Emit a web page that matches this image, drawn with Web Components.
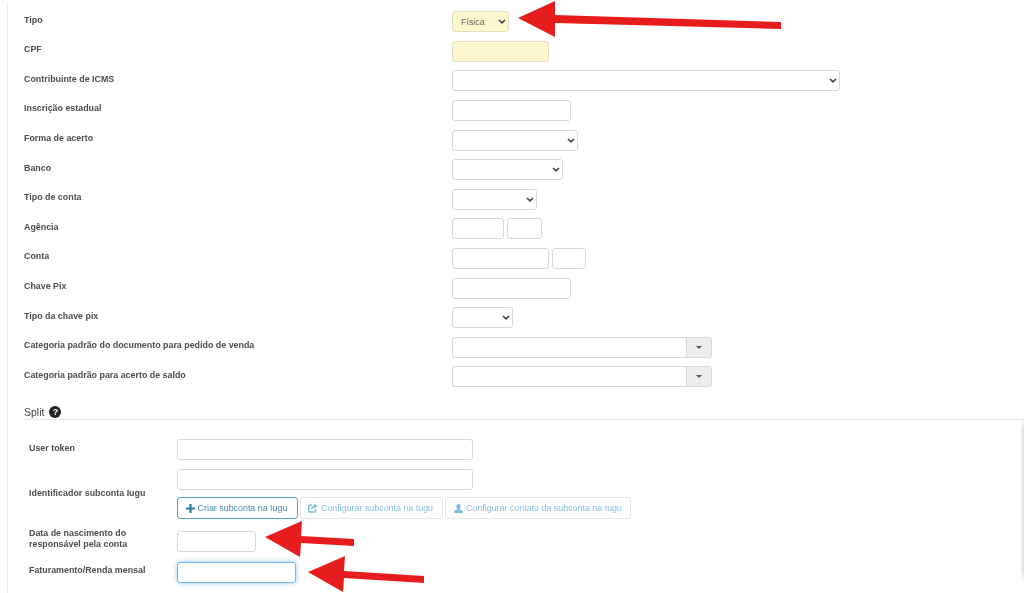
<!DOCTYPE html>
<html lang="pt-BR">
<head>
<meta charset="utf-8">
<title>Cadastro</title>
<style>
  html, body { margin: 0; padding: 0; background: #fff; }
  body { font-family: "Liberation Sans", Arial, sans-serif; overflow: hidden; height: 593px; }
</style>
</head>
<body>
<template id="field-css">
  <style>
    :host { display: inline-block; vertical-align: top; position: relative; }
    input, select {
      display: block; box-sizing: border-box; width: 100%; height: 21px; margin: 0;
      border: 1px solid #d8d8d8; border-radius: 3px; background-color: #fff;
      font: 8.9px "Liberation Sans", Arial, sans-serif; color: #666; padding: 0 0 0 8px; outline: none;
    }
    select { appearance: none; }
    svg { position: absolute; right: 3px; top: 8px; pointer-events: none; }
    :host([tone="warn"]) input, :host([tone="warn"]) select { background-color: #fdf7cd; border-color: #e3dfc2; }
    :host([focused]) input { border-color: #74b6ea; box-shadow: 0 0 5px rgba(102,175,233,.7); }
  </style>
</template>

<form-page>
  <div slot="rows">
    <form-row label="Tipo"><select-field w="57" tone="warn" value="Física"></select-field></form-row>
    <form-row label="CPF"><text-field w="97" tone="warn"></text-field></form-row>
    <form-row label="Contribuinte de ICMS"><select-field w="388"></select-field></form-row>
    <form-row label="Inscrição estadual"><text-field w="119"></text-field></form-row>
    <form-row label="Forma de acerto"><select-field w="126"></select-field></form-row>
    <form-row label="Banco"><select-field w="111"></select-field></form-row>
    <form-row label="Tipo de conta"><select-field w="85"></select-field></form-row>
    <form-row label="Agência"><text-field w="52"></text-field><text-field w="35"></text-field></form-row>
    <form-row label="Conta"><text-field w="97"></text-field><text-field w="34"></text-field></form-row>
    <form-row label="Chave Pix"><text-field w="119"></text-field></form-row>
    <form-row label="Tipo da chave pix"><select-field w="61"></select-field></form-row>
    <form-row label="Categoria padrão do documento para pedido de venda"><combo-field></combo-field></form-row>
    <form-row label="Categoria padrão para acerto de saldo"><combo-field></combo-field></form-row>
  </div>

  <split-section>
    <split-row>
      <span slot="label">User token</span>
      <text-field w="296"></text-field>
    </split-row>
    <split-row>
      <span slot="label">Identificador subconta Iugu</span>
      <text-field w="296"></text-field>
      <div style="display:flex;gap:2px;">
        <action-button primary style="width:121px;padding-right:2px">
          <svg width="9" height="9" viewBox="0 0 9 9" fill="#2f7ea6"><path d="M3.400 0h2.200v3.400H9v2.200H5.600V9H3.400V5.600H0V3.400h3.400z"/></svg>
          Criar subconta na Iugu
        </action-button>
        <action-button style="width:143px;padding-right:2px">
          <svg width="10" height="10" viewBox="0 0 10 10" fill="none" stroke="#7dbcda" stroke-width="1.400"><path d="M7.600 6v2a1 1 0 0 1-1 1H1.700a1 1 0 0 1-1-1V3.300a1 1 0 0 1 1-1H4"/><path d="M3.700 6.200C4 4.200 5.400 3 7.400 3"/><path d="M6.200 .6 9.800 3 6.200 5.400" fill="#7dbcda" stroke="none"/></svg>
          Configurar subconta na Iugu
        </action-button>
        <action-button style="width:186px">
          <svg width="9" height="9" viewBox="0 0 9 9" fill="#7dbcda"><path d="M4.500 0C5.900 0 6.700 1 6.700 2.400 6.700 3.600 6 4.600 5.600 5c0 .5.400.7 1.200 1C8 6.400 9 6.900 9 7.600V9H0V7.600c0-.7 1-1.200 2.200-1.600.8-.3 1.200-.5 1.200-1C3 4.600 2.300 3.600 2.300 2.400 2.300 1 3.100 0 4.500 0z"/></svg>
          Configurar contato da subconta na Iugu
        </action-button>
      </div>
    </split-row>
    <split-row style="margin-top:3px;--lift:-3px">
      <span slot="label">Data de nascimento do responsável pela conta</span>
      <text-field w="79"></text-field>
    </split-row>
    <split-row style="margin-top:1px;--lift:-2px">
      <span slot="label">Faturamento/Renda mensal</span>
      <text-field w="119" focused></text-field>
    </split-row>
  </split-section>

  <arrow-layer></arrow-layer>
</form-page>

<script>
  const CHEVRON = '<svg width="8" height="5" viewBox="0 0 8 5" fill="none" stroke="#444" stroke-width="1.700"><path d="M1 1l3 2.800L7 1"/></svg>';

  function fieldShadow(el, inner) {
    const root = el.attachShadow({ mode: 'open' });
    root.appendChild(document.getElementById('field-css').content.cloneNode(true));
    const box = document.createElement('template');
    box.innerHTML = inner;
    root.appendChild(box.content.cloneNode(true));
    el.style.width = el.getAttribute('w') + 'px';
  }

  class TextField extends HTMLElement {
    connectedCallback() {
      fieldShadow(this, '<input type="text">');
    }
  }

  class SelectField extends HTMLElement {
    connectedCallback() {
      const value = this.getAttribute('value') || '';
      fieldShadow(this, `<select><option>${value}</option></select>${CHEVRON}`);
    }
  }

  // input + dropdown button, the autocomplete thing
  class ComboField extends HTMLElement {
    connectedCallback() {
      this.attachShadow({ mode: 'open' });
      this.shadowRoot.innerHTML = `
        <style>
          :host { display: flex; width: 260px; height: 21px; }
          input {
            flex: 1; min-width: 0; box-sizing: border-box; margin: 0; padding: 0 6px; height: 21px;
            border: 1px solid #d8d8d8; border-right: 0; border-radius: 3px 0 0 3px; outline: none;
          }
          span {
            width: 26px; box-sizing: border-box; border: 1px solid #d8d8d8; border-radius: 0 3px 3px 0;
            background: #eee; display: flex; align-items: center; justify-content: center;
          }
          i { width: 0; height: 0; border: 3px solid transparent; border-top: 3px solid #555; border-bottom: 0; }
        </style>
        <input type="text"><span><i></i></span>`;
    }
  }

  class FormRow extends HTMLElement {
    connectedCallback() {
      this.attachShadow({ mode: 'open' });
      this.shadowRoot.innerHTML = `
        <style>
          :host { display: grid; grid-template-columns: 428px 1fr; height: 29.6px; }
          .label { font: bold 8.9px/13px "Liberation Sans", Arial, sans-serif; color: #4d4d4d; padding-top: 2.4px; }
          .ctl { display: flex; gap: 3px; align-items: flex-start; }
        </style>
        <div class="label">${this.getAttribute('label')}</div>
        <div class="ctl"><slot></slot></div>`;
    }
  }

  class SplitRow extends HTMLElement {
    connectedCallback() {
      this.attachShadow({ mode: 'open' });
      this.shadowRoot.innerHTML = `
        <style>
          :host { display: grid; grid-template-columns: 148px 1fr; align-items: center; }
          .label {
            font: bold 8.9px/11px "Liberation Sans", Arial, sans-serif; color: #4d4d4d;
            padding-right: 8px; margin: -2px 0; transform: translateY(var(--lift, -1px));
          }
          .ctl { display: flex; flex-direction: column; gap: 7px; align-items: flex-start; }
        </style>
        <div class="label"><slot name="label"></slot></div>
        <div class="ctl"><slot></slot></div>`;
    }
  }

  class ActionButton extends HTMLElement {
    connectedCallback() {
      this.attachShadow({ mode: 'open' });
      this.shadowRoot.innerHTML = `
        <style>
          :host {
            display: inline-flex; align-items: center; justify-content: center; gap: 3px; box-sizing: border-box; height: 22px;
            border: 1px solid #e6e6e6; border-radius: 3px; background: #fff;
            font: 8.9px "Liberation Sans", Arial, sans-serif; color: #86c0dc;
          }
          :host([primary]) { border-color: #5a9fc2; color: #468aae; }
          ::slotted(svg) { display: block; }
        </style>
        <slot></slot>`;
    }
  }

  class SplitSection extends HTMLElement {
    connectedCallback() {
      this.attachShadow({ mode: 'open' });
      this.shadowRoot.innerHTML = `
        <style>
          :host { display: block; position: relative; }
          .legend {
            margin-left: 24px; height: 24px; box-sizing: border-box; border-bottom: 1px solid #e9e9e9;
            font: 10.5px/13px "Liberation Sans", Arial, sans-serif; color: #444; display: flex; gap: 5px; align-items: flex-end;
          }
          .q {
            width: 12px; height: 12px; border-radius: 50%; background: #222; color: #fff;
            font: bold 9px/12px "Liberation Sans", Arial, sans-serif; text-align: center; margin-bottom: 1px;
          }
          .body { padding: 19px 0 0 29px; display: flex; flex-direction: column; gap: 9px; }
          .edge {
            position: absolute; right: 0; top: 22px; bottom: 1px; width: 4px;
            background: linear-gradient(to right, rgba(0,0,0,0), rgba(0,0,0,.14));
            -webkit-mask-image: linear-gradient(to bottom, transparent, #000 12px, #000 calc(100% - 12px), transparent);
            mask-image: linear-gradient(to bottom, transparent, #000 12px, #000 calc(100% - 12px), transparent);
          }
        </style>
        <div class="legend"><span>Split</span><span class="q">?</span></div>
        <div class="body"><slot></slot></div>
        <div class="edge"></div>`;
    }
  }

  class ArrowLayer extends HTMLElement {
    connectedCallback() {
      this.attachShadow({ mode: 'open' });
      this.shadowRoot.innerHTML = `
        <style>
          :host { position: absolute; left: 0; top: 0; width: 1024px; height: 593px; pointer-events: none; }
          svg { display: block; }
        </style>
        <svg width="1024" height="593" viewBox="0 0 1024 593" fill="#e71d1d">
          <polygon points="518,18 555,1 555,15 781,22 781,29 555,23 555,37"/>
          <polygon points="265,537 302,521 301,536 354,539 354,546 301,543 300,557"/>
          <polygon points="308,572 345,556 344,571 424,576 424,583 344,578 343,592"/>
        </svg>`;
    }
  }

  class FormPage extends HTMLElement {
    connectedCallback() {
      this.attachShadow({ mode: 'open' });
      this.shadowRoot.innerHTML = `
        <style>
          /* the source shot is a soft upscale */
          :host { display: block; position: relative; height: 593px; overflow: hidden; filter: blur(.3px); }
          .rule { position: absolute; left: 7px; top: 3px; bottom: 0; width: 1px; background: #eee; }
          .rows { padding: 11.2px 0 0 24px; height: 396px; box-sizing: border-box; }
        </style>
        <div class="rule"></div>
        <div class="rows"><slot name="rows"></slot></div>
        <slot></slot>`;
    }
  }

  customElements.define('text-field', TextField);
  customElements.define('select-field', SelectField);
  customElements.define('combo-field', ComboField);
  customElements.define('form-row', FormRow);
  customElements.define('split-row', SplitRow);
  customElements.define('action-button', ActionButton);
  customElements.define('split-section', SplitSection);
  customElements.define('arrow-layer', ArrowLayer);
  customElements.define('form-page', FormPage);
</script>
</body>
</html>
